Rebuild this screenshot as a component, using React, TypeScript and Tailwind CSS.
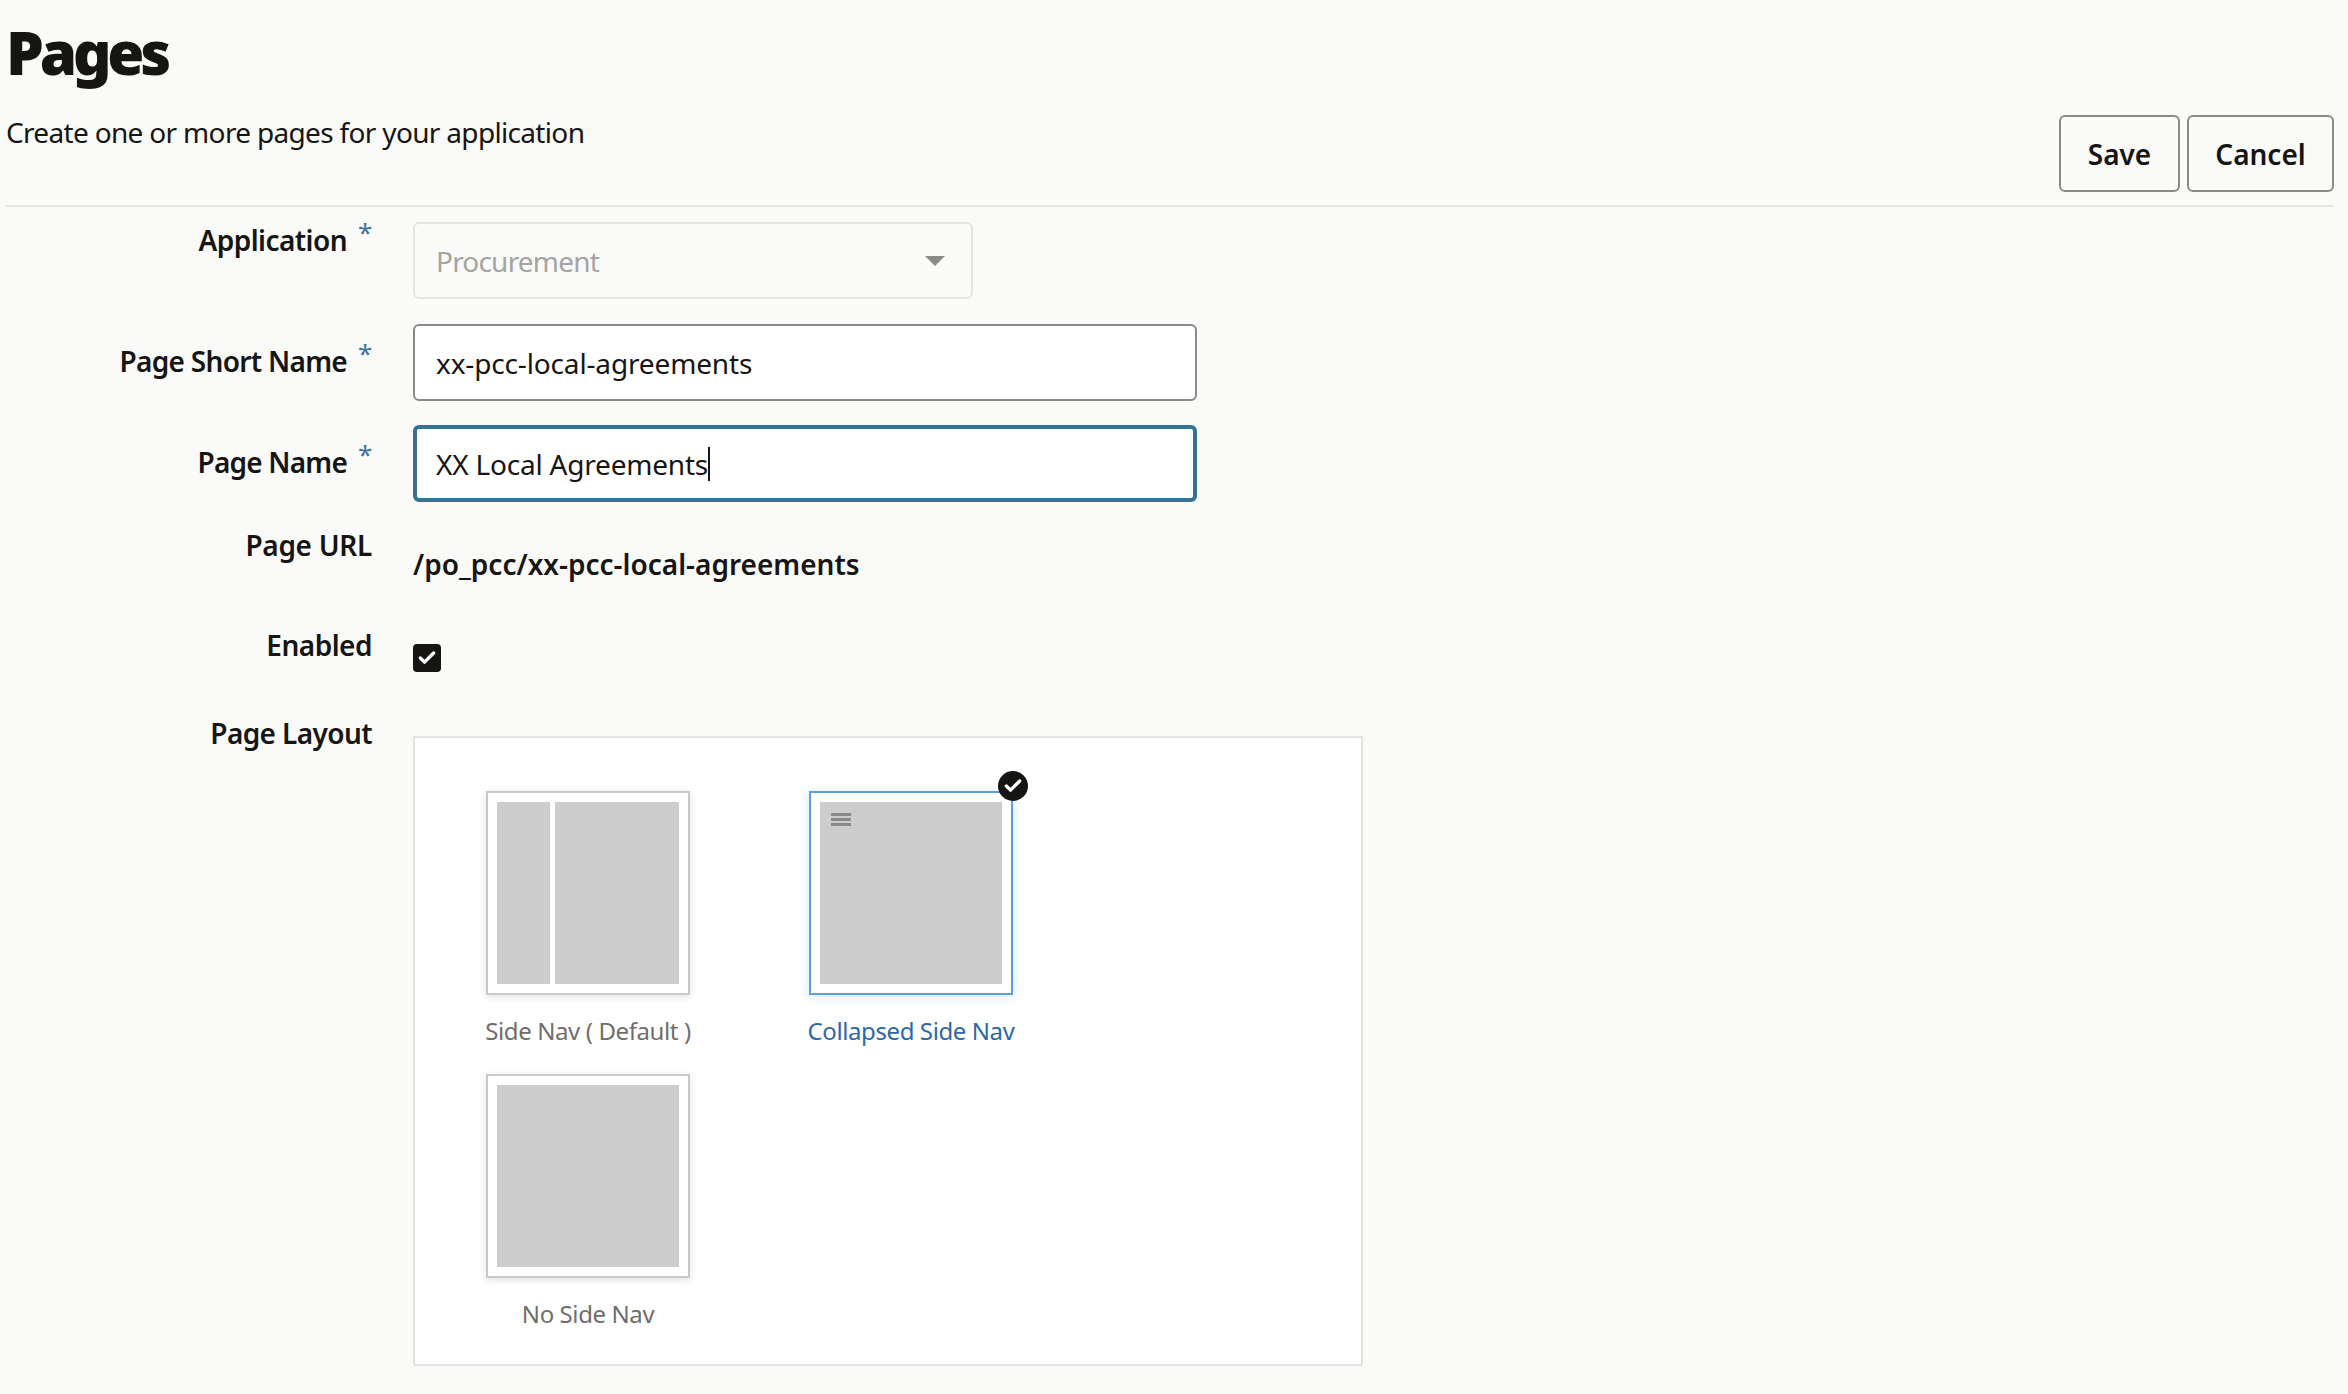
import { Check } from 'lucide-react';

const sans = "font-['Noto_Sans','Open_Sans',sans-serif]";

function Label({ text, required, tracking }: { text: string; required?: boolean; tracking: string }) {
  return (
    <div className="flex w-[366px] shrink-0 justify-end text-[28px] leading-[38px] font-semibold text-[#161513]">
      <span className={tracking}>{text}</span>
      {required && <span className="mt-[-2px] ml-[11px] w-[14px] text-[26px] leading-[26px] font-normal text-[#3a749c]">*</span>}
    </div>
  );
}

function LayoutCard({ label, selected, children }: { label: string; selected?: boolean; children: React.ReactNode }) {
  return (
    <div className="flex w-[206px] flex-col items-center">
      <div
        className={
          selected
            ? 'relative h-[204px] w-[204px] border-[2px] border-[#5b9fe3] bg-white p-[9px] shadow-[0_2px_10px_rgba(91,159,227,0.25)]'
            : 'relative h-[204px] w-[204px] border-[2px] border-[#cbc9c7] bg-white p-[9px] shadow-[0_2px_8px_rgba(0,0,0,0.12)]'
        }
      >
        {children}
        {selected && (
          <div className="absolute top-[-22px] right-[-17px] flex h-[30px] w-[30px] items-center justify-center rounded-full bg-[#161513]">
            <Check size={20} strokeWidth={4} className="text-white" />
          </div>
        )}
      </div>
      <div className={selected ? 'mt-[20px] whitespace-nowrap text-[24px] leading-[32px] tracking-[-0.4px] text-[#2d68a5]' : 'mt-[20px] whitespace-nowrap text-[24px] leading-[32px] tracking-[-0.4px] text-[#6f6e6c]'}>
        {label}
      </div>
    </div>
  );
}

export default function App() {
  return (
    <div className={`${sans} h-[1394px] overflow-hidden bg-[#fafaf8] pr-[14px] pl-[6px] text-[#161513]`}>
      <div className="flex h-[207px] items-start justify-between border-b-[2px] border-[#e4e3e1]">
        <div>
          <h1 className="mt-[16px] text-[60px] leading-[72px] font-black tracking-[-4.2px]">Pages</h1>
          <p className="mt-[25px] text-[28px] leading-[38px] tracking-[-0.67px]">Create one or more pages for your application</p>
        </div>
        <div className="mt-[115px] flex gap-[7px]">
          <button className="h-[77px] w-[121px] rounded-[6px] border-[2px] border-[#8b8a88] text-[28px] font-semibold">Save</button>
          <button className="h-[77px] w-[147px] rounded-[6px] border-[2px] border-[#8b8a88] text-[28px] font-semibold">Cancel</button>
        </div>
      </div>

      <div className="flex flex-col">
        <div className="mt-[15px] flex gap-[41px]">
          <div className="mt-[-1px]">
            <Label text="Application" required tracking="tracking-[-0.55px]" />
          </div>
          <div className="flex h-[77px] w-[560px] items-center justify-between rounded-[6px] border-[2px] border-[#e4e3e1] pr-[26px] pl-[21px] text-[28px] tracking-[-0.8px] text-[#a5a4a2]">
            <span>Procurement</span>
            <span className="h-0 w-0 border-x-[10px] border-t-[10px] border-x-transparent border-t-[#8b8a88]" />
          </div>
        </div>

        <div className="mt-[25px] flex gap-[41px]">
          <div className="pt-[18px]">
            <Label text="Page Short Name" required tracking="tracking-[-0.7px]" />
          </div>
          <div className="flex h-[77px] w-[784px] items-center rounded-[6px] border-[2px] border-[#8b8a88] bg-white pl-[21px] text-[28px] tracking-[-0.15px]">
            xx-pcc-local-agreements
          </div>
        </div>

        <div className="mt-[24px] flex gap-[41px]">
          <div className="pt-[18px]">
            <Label text="Page Name" required tracking="tracking-[-0.8px]" />
          </div>
          <div className="flex h-[77px] w-[784px] items-center rounded-[6px] border-[4px] border-[#347298] bg-white pl-[19px] text-[28px] tracking-[-0.2px]">
            XX Local Agreements
            <span className="h-[34px] w-[2px] bg-[#161513]" />
          </div>
        </div>

        <div className="mt-[24px] flex gap-[41px]">
          <Label text="Page URL" tracking="tracking-[-0.3px]" />
          <div className="pt-[19px] text-[28px] leading-[38px] font-semibold">/po_pcc/xx-pcc-local-agreements</div>
        </div>

        <div className="mt-[43px] flex gap-[41px]">
          <Label text="Enabled" tracking="tracking-[-0.5px]" />
          <div className="pt-[18px]">
            <div className="flex h-[28px] w-[28px] items-center justify-center rounded-[4px] bg-[#161513]">
              <Check size={20} strokeWidth={4} className="text-white" />
            </div>
          </div>
        </div>

        <div className="mt-[42px] flex gap-[41px]">
          <Label text="Page Layout" tracking="tracking-[-0.6px]" />
          <div className="mt-[22px] h-[630px] w-[950px] border-[2px] border-[#e4e3e1] bg-white pt-[53px] pl-[70px]">
            <div className="flex flex-wrap gap-x-[117px] gap-y-[27px]">
              <LayoutCard label="Side Nav ( Default )">
                <div className="flex h-full gap-[5px]">
                  <div className="w-[53px] bg-[#cecdcd]" />
                  <div className="flex-1 bg-[#cecdcd]" />
                </div>
              </LayoutCard>
              <LayoutCard label="Collapsed Side Nav" selected>
                <div className="h-full bg-[#cecdcd] pt-[11px] pl-[11px]">
                  <div className="flex w-[20px] flex-col gap-[2px]">
                    <div className="h-[3px] bg-[#8a8989]" />
                    <div className="h-[3px] bg-[#8a8989]" />
                    <div className="h-[3px] bg-[#8a8989]" />
                  </div>
                </div>
              </LayoutCard>
              <div className="w-[206px]" />
              <LayoutCard label="No Side Nav">
                <div className="h-full bg-[#cecdcd]" />
              </LayoutCard>
            </div>
          </div>
        </div>
      </div>
    </div>
  );
}
